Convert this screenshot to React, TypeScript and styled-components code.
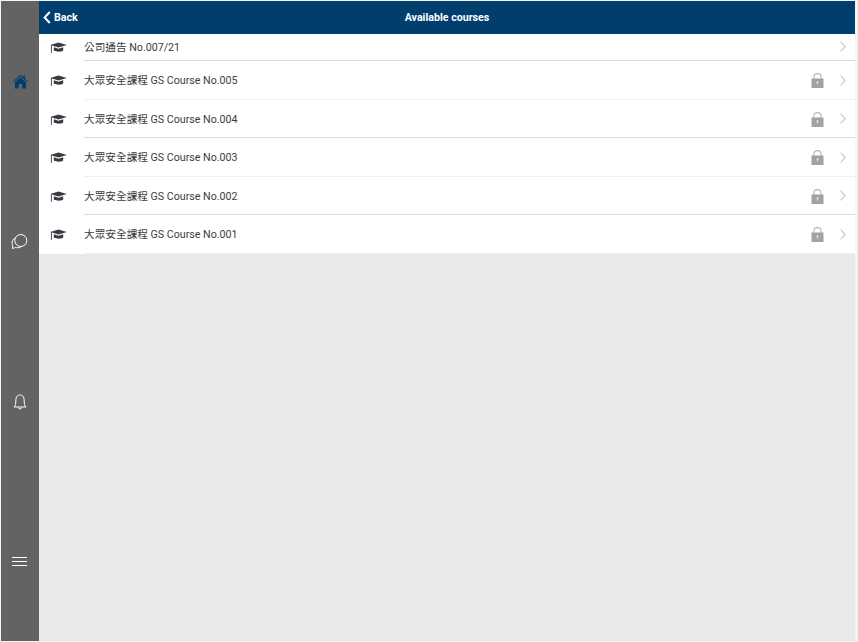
import { createGlobalStyle } from 'styled-components';
import styled from 'styled-components';

const GlobalStyle = createGlobalStyle`
  html, body {
    margin: 0;
    padding: 0;
    height: 100%;
    background: #f4f4f4;
    font-family: Roboto, 'Noto Sans CJK TC', sans-serif;
  }
`;

const Page = styled.div`
  box-sizing: border-box;
  width: 858px;
  height: 642px;
  padding: 1px 3px 1px 1px;
  display: flex;
  overflow: hidden;
`;

const Sidebar = styled.nav`
  width: 38px;
  flex-shrink: 0;
  background: #636363;
  display: flex;
  flex-direction: column;
`;

const SideItem = styled.div`
  height: 160.3px;
  display: flex;
  align-items: center;
  justify-content: center;
  padding: 2px 1px 0 0;
  box-sizing: border-box;
  &:first-child {
    padding: 0;
  }
`;

const Main = styled.main`
  flex: 1;
  display: flex;
  flex-direction: column;
  background: #e9e9e9;
`;

const Header = styled.header`
  height: 33px;
  flex-shrink: 0;
  background: #003e6d;
  color: #ffffff;
  position: relative;
  display: flex;
  align-items: center;
  justify-content: center;
`;

const BackLink = styled.div`
  position: absolute;
  left: 4px;
  top: 0;
  height: 33px;
  display: flex;
  align-items: center;
  gap: 3px;
  font-size: 10.67px;
  font-weight: 700;
`;

const Title = styled.div`
  font-size: 10.67px;
  font-weight: 700;
`;

const List = styled.div`
  background: #ffffff;
  display: flex;
  flex-direction: column;
`;

const Row = styled.div<{ $first?: boolean }>`
  box-sizing: border-box;
  height: ${({ $first }) => ($first ? '27px' : '38.5px')};
  display: flex;
  align-items: center;
  position: relative;
  padding-left: 11px;
  padding-right: 9px;
  padding-bottom: ${({ $first }) => ($first ? '1px' : '0')};
  padding-top: ${({ $first }) => ($first ? '0' : '1px')};
`;

const Divider = styled.div<{ $strong?: boolean }>`
  position: absolute;
  left: 45px;
  right: 0;
  bottom: 0;
  height: 1px;
  background: ${({ $strong }) => ($strong ? '#dcdcdc' : '#efefef')};
`;

const CapBox = styled.div`
  width: 34px;
  flex-shrink: 0;
  display: flex;
  align-items: center;
`;

const Label = styled.div<{ $first?: boolean }>`
  flex: 1;
  font-size: 10.67px;
  color: #3c3c3c;
  white-space: nowrap;
  padding-bottom: ${({ $first }) => ($first ? '1px' : '2.2px')};
`;

const LockBox = styled.div`
  width: 13px;
  height: 17px;
  margin-right: 16px;
  display: flex;
`;

const Chevron = styled.svg`
  width: 6px;
  height: 11px;
  flex-shrink: 0;
  margin-bottom: 1.4px;
`;

const GradCap = () => (
  <svg width="17" height="13" viewBox="0 0 17 13">
    <path d="M8.5 1.4 L16.8 3.9 L8.5 6.6 L0.2 3.9 Z" fill="#3a3a42" />
    <path d="M3.8 6.2 V9.6 C5.4 11.2 11.6 11.2 13.2 9.6 V6.2 L8.5 7.8 Z" fill="#3a3a42" />
    <path d="M1.4 4.2 V11.8" stroke="#3a3a42" strokeWidth="0.9" fill="none" />
  </svg>
);

const Lock = () => (
  <svg width="13" height="17" viewBox="0 0 13 17">
    <path d="M3 8 V4.6 C3 0.6 10 0.6 10 4.6 V8" stroke="#b4b4b4" strokeWidth="1.1" fill="none" />
    <rect x="0.5" y="6.5" width="12" height="9.5" fill="#a2a2a2" />
    <circle cx="6.5" cy="10.2" r="1" fill="#e8e8e8" />
    <rect x="6.1" y="10.6" width="0.8" height="2.2" fill="#e8e8e8" />
  </svg>
);

const Arrow = () => (
  <Chevron viewBox="0 0 6 11">
    <path d="M0.6 0.6 L5.2 5.5 L0.6 10.4" stroke="#c8c8c8" strokeWidth="1.1" fill="none" />
  </Chevron>
);

const courses = [
  { name: '公司通告 No.007/21', locked: false },
  { name: '大眾安全課程 GS Course No.005', locked: true },
  { name: '大眾安全課程 GS Course No.004', locked: true },
  { name: '大眾安全課程 GS Course No.003', locked: true },
  { name: '大眾安全課程 GS Course No.002', locked: true },
  { name: '大眾安全課程 GS Course No.001', locked: true },
];

export default function App() {
  return (
    <>
      <GlobalStyle />
      <Page>
        <Sidebar>
          <SideItem>
            <svg width="15" height="15" viewBox="0 0 15 15">
              <path d="M7.5 0.8 L10.4 3.3 V1.6 H12 V4.7 L14.8 7.2 L14.2 8 L7.5 2.3 L0.8 8 L0.2 7.2 Z" fill="#003e6d" />
              <path d="M7.5 3.4 L13 8 V14.6 H9.2 V10 H5.8 V14.6 H2 V8 Z" fill="#003e6d" />
            </svg>
          </SideItem>
          <SideItem>
            <svg width="17" height="16" viewBox="0 0 17 16" fill="none" stroke="#ffffff" strokeWidth="1">
              <circle cx="9.8" cy="6.5" r="6" />
              <path d="M4.4 3.8 C2 4.8 0.7 7.2 1.2 9.6 C1.5 11 2 12 1.4 14.6 C3.4 14 4.4 13.2 5.6 13.6 C7.4 14 9 13.6 10.2 12.6" />
            </svg>
          </SideItem>
          <SideItem>
            <svg width="14" height="16" viewBox="0 0 14 16" fill="none" stroke="#ffffff" strokeWidth="1">
              <path d="M1 13 C2.5 11.5 2.8 10 2.8 7 C2.8 2 5 1 7 1 C9 1 11.2 2 11.2 7 C11.2 10 11.5 11.5 13 13 Z" />
              <path d="M5.4 13.5 C5.6 15.4 8.4 15.4 8.6 13.5" />
            </svg>
          </SideItem>
          <SideItem>
            <svg width="15" height="10" viewBox="0 0 15 10" stroke="#ffffff" strokeWidth="1">
              <path d="M0 0.5 H15 M0 4.5 H15 M0 8.5 H15" />
            </svg>
          </SideItem>
        </Sidebar>
        <Main>
          <Header>
            <BackLink>
              <svg width="8" height="13" viewBox="0 0 8 13">
                <path d="M6.8 1 L1.6 6.5 L6.8 12" stroke="#ffffff" strokeWidth="2" fill="none" />
              </svg>
              Back
            </BackLink>
            <Title>Available courses</Title>
          </Header>
          <List>
            {courses.map((course, index) => (
              <Row key={course.name} $first={index === 0}>
                <CapBox>
                  <GradCap />
                </CapBox>
                <Label $first={index === 0}>{course.name}</Label>
                {course.locked && (
                  <LockBox>
                    <Lock />
                  </LockBox>
                )}
                <Arrow />
                <Divider $strong={index % 2 === 0} />
              </Row>
            ))}
          </List>
        </Main>
      </Page>
    </>
  );
}
